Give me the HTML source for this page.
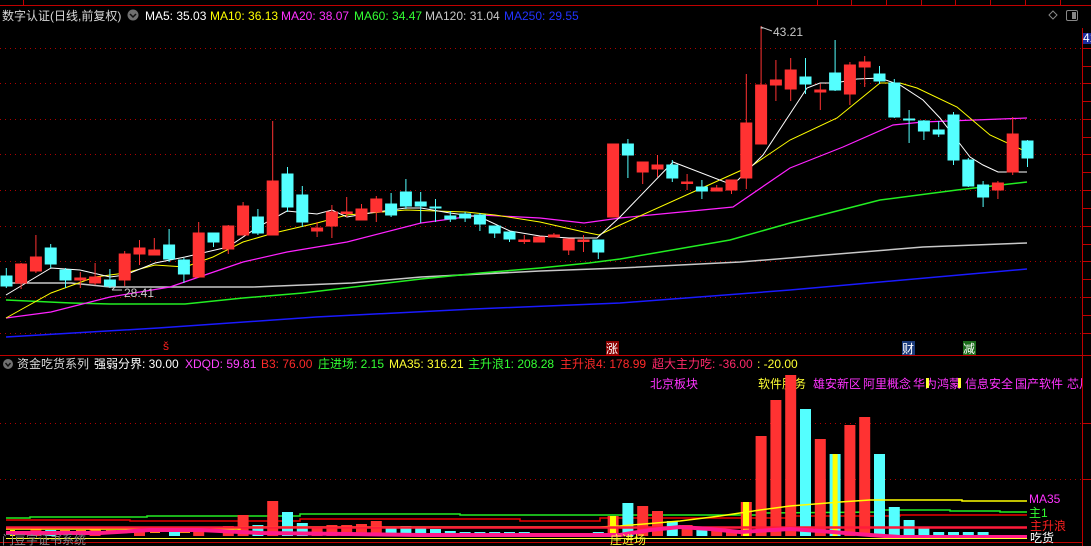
<!DOCTYPE html>
<html><head><meta charset="utf-8"><style>
html,body{margin:0;padding:0;background:#000;width:1091px;height:546px;overflow:hidden}
svg{display:block}
text{font-family:"Liberation Sans","Noto Sans CJK SC",sans-serif;font-size:12px}
</style></head><body>
<svg width="1091" height="546" xmlns="http://www.w3.org/2000/svg">
<rect width="1091" height="546" fill="#000"/>
<!-- top border -->
<line x1="0" y1="5.5" x2="1091" y2="5.5" stroke="#c00000"/>
<line x1="23.5" y1="0" x2="23.5" y2="5" stroke="#c00000"/>
<g stroke="#c00000"><line x1="817.5" y1="0" x2="817.5" y2="5"/><line x1="851.5" y1="0" x2="851.5" y2="5"/><line x1="886.5" y1="0" x2="886.5" y2="5"/><line x1="921.5" y1="0" x2="921.5" y2="5"/><line x1="955.5" y1="0" x2="955.5" y2="5"/><line x1="990.5" y1="0" x2="990.5" y2="5"/><line x1="1025.5" y1="0" x2="1025.5" y2="5"/><line x1="1060.5" y1="0" x2="1060.5" y2="5"/></g>
<!-- header -->
<text x="2" y="20" fill="#d8d8d8">数字认证(日线,前复权)</text>
<circle cx="133" cy="15" r="5.5" fill="#707070"/><path d="M130 14 L133 17 L136 14" stroke="#111" stroke-width="1.5" fill="none"/>
<text x="145" y="20" fill="#fff">MA5: 35.03</text>
<text x="210" y="20" fill="#ffff00">MA10: 36.13</text>
<text x="281" y="20" fill="#ff33ff">MA20: 38.07</text>
<text x="354" y="20" fill="#33ff33">MA60: 34.47</text>
<text x="425" y="20" fill="#c8c8c8">MA120: 31.04</text>
<text x="504" y="20" fill="#2233ff">MA250: 29.55</text>
<!-- icons top right -->
<path d="M1053 11 L1057 15 L1053 19 L1049 15 Z" fill="none" stroke="#888"/>
<rect x="1066.5" y="10.5" width="11" height="10" rx="1.5" fill="none" stroke="#888"/><rect x="1072" y="12" width="4" height="7" fill="#888"/>
<!-- right axis -->
<line x1="1082.5" y1="28" x2="1082.5" y2="546" stroke="#c00000"/>
<rect x="1083" y="33" width="8" height="11" fill="#1a2a9a"/><text x="1083" y="42" fill="#fff" font-size="11">41</text>
<g stroke="#c00000"><line x1="1083" y1="48.5" x2="1091" y2="48.5"/><line x1="1083" y1="66.5" x2="1091" y2="66.5"/><line x1="1083" y1="83.5" x2="1091" y2="83.5"/><line x1="1083" y1="101.5" x2="1091" y2="101.5"/><line x1="1083" y1="119.5" x2="1091" y2="119.5"/><line x1="1083" y1="137.5" x2="1091" y2="137.5"/><line x1="1083" y1="154.5" x2="1091" y2="154.5"/><line x1="1083" y1="172.5" x2="1091" y2="172.5"/><line x1="1083" y1="190.5" x2="1091" y2="190.5"/><line x1="1083" y1="208.5" x2="1091" y2="208.5"/><line x1="1083" y1="226.5" x2="1091" y2="226.5"/><line x1="1083" y1="244.5" x2="1091" y2="244.5"/><line x1="1083" y1="261.5" x2="1091" y2="261.5"/><line x1="1083" y1="279.5" x2="1091" y2="279.5"/><line x1="1083" y1="297.5" x2="1091" y2="297.5"/><line x1="1083" y1="315.5" x2="1091" y2="315.5"/><line x1="1083" y1="333.5" x2="1091" y2="333.5"/><line x1="1083" y1="423.5" x2="1091" y2="423.5"/><line x1="1083" y1="479.5" x2="1091" y2="479.5"/></g>
<!-- grid -->
<g stroke="#b00000" stroke-dasharray="1,4">
<line x1="0" y1="48.5" x2="1082" y2="48.5"/><line x1="0" y1="83.5" x2="1082" y2="83.5"/><line x1="0" y1="119.5" x2="1082" y2="119.5"/><line x1="0" y1="154.5" x2="1082" y2="154.5"/><line x1="0" y1="190.5" x2="1082" y2="190.5"/><line x1="0" y1="226.5" x2="1082" y2="226.5"/><line x1="0" y1="261.5" x2="1082" y2="261.5"/><line x1="0" y1="297.5" x2="1082" y2="297.5"/><line x1="0" y1="333.5" x2="1082" y2="333.5"/>
<line x1="0" y1="423.5" x2="1082" y2="423.5"/><line x1="0" y1="479.5" x2="1082" y2="479.5"/>
</g>
<!-- MA lines -->
<polyline fill="none" stroke="#1a1aff" stroke-width="1.5" points="6,337 158,328 316,317 474,309 620,303 790,290 1027,269"/>
<polyline fill="none" stroke="#c8c8c8" stroke-width="1.5" points="6,283 71,283 110,287 253,287 352,283 421,277 540,271 620,268 740,262 923,247 1027,243"/>
<polyline fill="none" stroke="#22ee22" stroke-width="1.5" points="6,300 71,303 110,304 185,304 243,298 303,293 421,279 480,273 540,268 589,263 620,259 730,240 790,223 880,200 957,190 1027,182"/>
<polyline fill="none" stroke="#ff22ff" stroke-width="1.2" points="6,318 51,312 110,297 170,287 199,277 243,262 287,252 347,242 421,223 480,215 540,218 584,223 620,218 733,207 790,168 843,147 893,125 923,122 1027,118"/>
<polyline fill="none" stroke="#ffff00" stroke-width="1" points="6,318 51,293 95,277 125,273 155,265 185,267 213,257 243,242 274,233 317,223 347,215 406,210 466,212 495,215 540,222 584,232 599,235 620,225 753,165 790,140 837,118 880,83 900,83 917,88 957,107 990,135 1027,152"/>
<polyline fill="none" stroke="#ffffff" stroke-width="1" points="6,295 51,268 80,270 110,277 125,275 155,263 185,257 228,247 258,227 287,211 317,214 332,210 347,217 376,212 406,208 421,208 450,213 480,217 510,231 540,236 569,238 597,238 620,217 673,162 730,184 738,180 763,155 807,88 820,83 835,83 857,79 880,78 900,85 923,100 940,118 957,140 970,157 983,165 998,172 1027,172"/>
<!-- candles -->
<g stroke-width="1">
<g stroke="#54ffff" fill="#54ffff">
<line x1="6.3" y1="268" x2="6.3" y2="288"/><rect x="1" y="276" width="11" height="10"/>
<line x1="50.7" y1="244" x2="50.7" y2="268"/><rect x="45.2" y="248" width="11" height="16"/>
<line x1="65.5" y1="268" x2="65.5" y2="288"/><rect x="60" y="270" width="11" height="10"/>
<line x1="109.9" y1="269" x2="109.9" y2="288"/><rect x="104.4" y="280" width="11" height="6"/>
<line x1="169.1" y1="229" x2="169.1" y2="262"/><rect x="163.6" y="245" width="11" height="14"/>
<line x1="183.9" y1="258" x2="183.9" y2="283"/><rect x="178.4" y="260" width="11" height="14"/>
<line x1="213.5" y1="233" x2="213.5" y2="247"/><rect x="208" y="233" width="11" height="9"/>
<line x1="257.9" y1="209" x2="257.9" y2="235"/><rect x="252.4" y="217" width="11" height="16"/>
<line x1="287.5" y1="167" x2="287.5" y2="212"/><rect x="282" y="174" width="11" height="33"/>
<line x1="302.3" y1="186" x2="302.3" y2="227"/><rect x="296.8" y="195" width="11" height="27"/>
<line x1="391.1" y1="193" x2="391.1" y2="217"/><rect x="385.6" y="204" width="11" height="11"/>
<line x1="405.9" y1="179" x2="405.9" y2="209"/><rect x="400.4" y="192" width="11" height="14"/>
<line x1="420.7" y1="192" x2="420.7" y2="223"/><rect x="415.2" y="202" width="11" height="4"/>
<line x1="435.5" y1="199" x2="435.5" y2="222"/><rect x="430" y="207" width="11" height="1"/>
<line x1="450.3" y1="211" x2="450.3" y2="222"/><rect x="444.8" y="216" width="11" height="3"/>
<line x1="465.1" y1="212" x2="465.1" y2="222"/><rect x="459.6" y="214" width="11" height="4"/>
<line x1="479.9" y1="213" x2="479.9" y2="231"/><rect x="474.4" y="215" width="11" height="9"/>
<line x1="494.7" y1="226" x2="494.7" y2="238"/><rect x="489.2" y="226" width="11" height="7"/>
<line x1="509.5" y1="232" x2="509.5" y2="242"/><rect x="504" y="232" width="11" height="7"/>
<line x1="598.3" y1="240" x2="598.3" y2="259"/><rect x="592.8" y="240" width="11" height="12"/>
<line x1="627.9" y1="139" x2="627.9" y2="178"/><rect x="622.4" y="144" width="11" height="11"/>
<line x1="672.3" y1="160" x2="672.3" y2="182"/><rect x="666.8" y="165" width="11" height="13"/>
<line x1="701.9" y1="180" x2="701.9" y2="199"/><rect x="696.4" y="187" width="11" height="4"/>
<line x1="805.5" y1="58" x2="805.5" y2="94"/><rect x="800" y="77" width="11" height="7"/>
<line x1="835.1" y1="40" x2="835.1" y2="91"/><rect x="829.6" y="73" width="11" height="17"/>
<line x1="879.5" y1="66" x2="879.5" y2="84"/><rect x="874" y="74" width="11" height="7"/>
<line x1="894.3" y1="79" x2="894.3" y2="118"/><rect x="888.8" y="83" width="11" height="34"/>
<line x1="909.1" y1="110" x2="909.1" y2="143"/><rect x="903.6" y="119" width="11" height="1"/>
<line x1="923.9" y1="120" x2="923.9" y2="140"/><rect x="918.4" y="121" width="11" height="10"/>
<line x1="938.7" y1="121" x2="938.7" y2="137"/><rect x="933.2" y="130" width="11" height="4"/>
<line x1="953.5" y1="112" x2="953.5" y2="165"/><rect x="948" y="115" width="11" height="45"/>
<line x1="968.3" y1="158" x2="968.3" y2="187"/><rect x="962.8" y="160" width="11" height="26"/>
<line x1="983.1" y1="181" x2="983.1" y2="207"/><rect x="977.6" y="185" width="11" height="12"/>
<line x1="1027.5" y1="140" x2="1027.5" y2="167"/><rect x="1022" y="141" width="11" height="17"/>
</g>
<g stroke="#ff3232" fill="#ff3232">
<line x1="21.1" y1="263" x2="21.1" y2="289"/><rect x="15.6" y="264" width="11" height="19"/>
<line x1="35.9" y1="235" x2="35.9" y2="273"/><rect x="30.4" y="257" width="11" height="14"/>
<line x1="80.3" y1="272" x2="80.3" y2="288"/><rect x="74.8" y="278" width="11" height="2"/>
<line x1="95.1" y1="263" x2="95.1" y2="285"/><rect x="89.6" y="277" width="11" height="6"/>
<line x1="124.7" y1="251" x2="124.7" y2="286"/><rect x="119.2" y="254" width="11" height="26"/>
<line x1="139.5" y1="240" x2="139.5" y2="265"/><rect x="134" y="248" width="11" height="6"/>
<line x1="154.3" y1="238" x2="154.3" y2="255"/><rect x="148.8" y="250" width="11" height="5"/>
<line x1="198.7" y1="222" x2="198.7" y2="278"/><rect x="193.2" y="233" width="11" height="44"/>
<line x1="228.3" y1="225" x2="228.3" y2="254"/><rect x="222.8" y="226" width="11" height="23"/>
<line x1="243.1" y1="202" x2="243.1" y2="235"/><rect x="237.6" y="206" width="11" height="29"/>
<line x1="272.7" y1="121" x2="272.7" y2="235"/><rect x="267.2" y="181" width="11" height="54"/>
<line x1="317.1" y1="222" x2="317.1" y2="237"/><rect x="311.6" y="228" width="11" height="3"/>
<line x1="331.9" y1="205" x2="331.9" y2="238"/><rect x="326.4" y="212" width="11" height="14"/>
<line x1="346.7" y1="197" x2="346.7" y2="217"/><rect x="341.2" y="212" width="11" height="1.5"/>
<line x1="361.5" y1="204" x2="361.5" y2="220"/><rect x="356" y="209" width="11" height="11"/>
<line x1="376.3" y1="196" x2="376.3" y2="222"/><rect x="370.8" y="199" width="11" height="13"/>
<line x1="524.3" y1="235" x2="524.3" y2="244"/><rect x="518.8" y="240" width="11" height="1.5"/>
<line x1="539.1" y1="237" x2="539.1" y2="242"/><rect x="533.6" y="237" width="11" height="5"/>
<line x1="553.9" y1="233" x2="553.9" y2="237"/><rect x="548.4" y="235" width="11" height="2"/>
<line x1="568.7" y1="239" x2="568.7" y2="255"/><rect x="563.2" y="239" width="11" height="11"/>
<line x1="583.5" y1="235" x2="583.5" y2="252"/><rect x="578" y="240" width="11" height="1.5"/>
<rect x="607.6" y="144" width="11" height="73"/>
<line x1="642.7" y1="162" x2="642.7" y2="184"/><rect x="637.2" y="162" width="11" height="10"/>
<line x1="657.5" y1="155" x2="657.5" y2="177"/><rect x="652" y="165" width="11" height="4"/>
<line x1="687.1" y1="174" x2="687.1" y2="190"/><rect x="681.6" y="182" width="11" height="1.5"/>
<line x1="716.7" y1="185" x2="716.7" y2="191"/><rect x="711.2" y="188" width="11" height="3"/>
<line x1="731.5" y1="180" x2="731.5" y2="194"/><rect x="726" y="180" width="11" height="10"/>
<line x1="746.3" y1="74" x2="746.3" y2="189"/><rect x="740.8" y="123" width="11" height="55"/>
<line x1="761.1" y1="26" x2="761.1" y2="144"/><rect x="755.6" y="85" width="11" height="59"/>
<line x1="775.9" y1="60" x2="775.9" y2="101"/><rect x="770.4" y="80" width="11" height="5"/>
<line x1="790.7" y1="58" x2="790.7" y2="101"/><rect x="785.2" y="70" width="11" height="19"/>
<line x1="820.3" y1="84" x2="820.3" y2="110"/><rect x="814.8" y="90" width="11" height="2"/>
<line x1="849.9" y1="62" x2="849.9" y2="105"/><rect x="844.4" y="65" width="11" height="29"/>
<line x1="864.7" y1="56" x2="864.7" y2="87"/><rect x="859.2" y="62" width="11" height="5"/>
<line x1="997.9" y1="181" x2="997.9" y2="199"/><rect x="992.4" y="183" width="11" height="7"/>
<line x1="1012.7" y1="117" x2="1012.7" y2="175"/><rect x="1007.2" y="134" width="11" height="38"/>
</g>
</g>
<!-- price annotations -->
<text x="773" y="36" fill="#c8c8c8" font-size="12">43.21</text>
<path d="M761 27 L772 31" stroke="#c8c8c8" fill="none"/><text x="760" y="31" fill="#c8c8c8" font-size="8">-</text>
<text x="124" y="297" fill="#c8c8c8" font-size="12">28.41</text>
<path d="M112 290 L122 290 M112 290 L115 287" stroke="#c8c8c8" fill="none"/>
<!-- event markers -->
<text x="163" y="350" fill="#ff2020" font-size="10">š</text>
<rect x="606" y="341" width="13" height="14" fill="#8a0000"/><text x="606" y="353" fill="#fff" font-size="12">涨</text>
<rect x="902" y="341" width="13" height="14" fill="#1a3a7a"/><text x="902" y="353" fill="#fff" font-size="12">财</text>
<rect x="963" y="341" width="13" height="14" fill="#1a6a1a"/><text x="963" y="353" fill="#fff" font-size="12">减</text>
<line x1="0" y1="355.5" x2="1091" y2="355.5" stroke="#c00000"/>
<!-- lower header -->
<circle cx="8" cy="364" r="5" fill="#707070"/><path d="M5.5 363 L8 366 L10.5 363" stroke="#111" stroke-width="1.4" fill="none"/>
<text x="17" y="368" fill="#d8d8d8">资金吃货系列</text>
<text x="94" y="368" fill="#fff">强弱分界: 30.00</text>
<text x="185" y="368" fill="#ff44ff">XDQD: 59.81</text>
<text x="261" y="368" fill="#ff2a2a">B3: 76.00</text>
<text x="318" y="368" fill="#33ff33">庄进场: 2.15</text>
<text x="389" y="368" fill="#ffff33">MA35: 316.21</text>
<text x="468" y="368" fill="#33ff33">主升浪1: 208.28</text>
<text x="560" y="368" fill="#ff2a2a">主升浪4: 178.99</text>
<text x="652" y="368" fill="#ff2a6a">超大主力吃: -36.00</text>
<text x="757" y="368" fill="#ffff33">: -20.00</text>
<text x="650" y="388" fill="#ff33ff">北京板块</text>
<text x="758" y="388" fill="#ffff33">软件服务</text>
<text x="813" y="388" fill="#ff33ff">雄安新区</text>
<text x="863" y="388" fill="#ff33ff">阿里概念</text>
<text x="913" y="388" fill="#ff33ff">华为鸿蒙</text>
<rect x="926" y="378" width="3" height="10" fill="#ffff33"/><rect x="958" y="378" width="3" height="10" fill="#ffff33"/>
<text x="965" y="388" fill="#ff33ff">信息安全</text>
<text x="1015" y="388" fill="#ff33ff">国产软件</text>
<text x="1067" y="388" fill="#ff33ff">芯片</text>
<rect x="1082" y="375" width="9" height="15" fill="#000"/>
<line x1="1082.5" y1="356" x2="1082.5" y2="546" stroke="#c00000"/>
<!-- lower panel lines behind bars -->
<polyline fill="none" stroke="#22ee22" stroke-width="1.5" points="6,518 30,518 30,517 147,517 147,516 300,516 300,514 460,514 460,515 760,515 760,513 880,512 880,510 950,510 950,511 1000,511 1000,512 1027,512"/>
<polyline fill="none" stroke="#ee0000" stroke-width="1.5" points="6,520 130,520 130,521 300,521 300,519 520,519 520,521 600,521 600,518 790,518 790,516 900,516 900,515 1027,515"/>
<!-- lower bars -->
<g fill="#ff3232">
<rect x="222.8" y="526" width="11" height="10"/><rect x="237.6" y="515" width="11" height="21"/><rect x="267.2" y="501" width="11" height="35"/>
<rect x="311.6" y="527" width="11" height="9"/><rect x="326.4" y="525" width="11" height="11"/><rect x="341.2" y="525" width="11" height="11"/><rect x="356" y="524" width="11" height="12"/><rect x="370.8" y="521" width="11" height="15"/>
<rect x="607.6" y="516" width="11" height="20"/><rect x="637.2" y="506" width="11" height="30"/><rect x="652" y="511" width="11" height="25"/><rect x="681.6" y="525" width="11" height="11"/><rect x="711.2" y="531" width="11" height="5"/><rect x="726" y="530" width="11" height="6"/>
<rect x="740.8" y="502" width="11" height="34"/><rect x="755.6" y="436" width="11" height="100"/><rect x="770.4" y="400" width="11" height="136"/><rect x="785.2" y="375" width="11" height="161"/><rect x="814.8" y="439" width="11" height="97"/><rect x="844.4" y="425" width="11" height="111"/><rect x="859.2" y="417" width="11" height="119"/>
<rect x="30.4" y="527" width="11" height="9"/><rect x="89.6" y="528" width="11" height="8"/><rect x="134" y="529" width="11" height="7"/><rect x="193.2" y="527" width="11" height="9"/>
</g>
<g fill="#54ffff">
<rect x="252.4" y="525" width="11" height="11"/><rect x="282" y="512" width="11" height="24"/><rect x="296.8" y="523" width="11" height="13"/>
<rect x="385.6" y="527" width="11" height="9"/><rect x="400.4" y="526" width="11" height="10"/><rect x="415.2" y="527" width="11" height="9"/><rect x="430" y="529" width="11" height="7"/><rect x="444.8" y="531" width="11" height="5"/><rect x="459.6" y="532" width="11" height="4"/><rect x="474.4" y="532" width="11" height="4"/><rect x="489.2" y="532" width="11" height="4"/><rect x="504" y="532" width="11" height="4"/><rect x="518.8" y="532" width="11" height="4"/><rect x="592.8" y="532" width="11" height="4"/>
<rect x="622.4" y="503" width="11" height="33"/><rect x="666.8" y="521" width="11" height="15"/><rect x="696.4" y="530" width="11" height="6"/>
<rect x="800" y="409" width="11" height="127"/><rect x="829.6" y="454" width="11" height="82"/><rect x="874" y="454" width="11" height="82"/><rect x="888.8" y="507" width="11" height="29"/><rect x="903.6" y="520" width="11" height="16"/><rect x="918.4" y="528" width="11" height="8"/><rect x="933.2" y="532" width="11" height="4"/><rect x="948" y="532" width="11" height="4"/><rect x="962.8" y="532" width="11" height="4"/><rect x="977.6" y="532" width="11" height="4"/>
<rect x="45.2" y="530" width="11" height="6"/><rect x="169" y="529" width="11" height="7"/>
</g>
<g fill="#ffff00"><rect x="610" y="516" width="6" height="20"/><rect x="743" y="502" width="6" height="34"/><rect x="832.6" y="454" width="5" height="82"/><rect x="10" y="530" width="5" height="6"/></g>
<g fill="#ff8c1a"><rect x="60" y="530" width="10" height="3"/><rect x="76" y="530" width="10" height="3"/><rect x="91" y="530" width="10" height="3"/><rect x="106" y="530" width="10" height="3"/><rect x="150" y="530" width="10" height="3"/><rect x="180" y="530" width="10" height="3"/></g>
<!-- lower overlays -->
<polyline fill="none" stroke="#ffff00" stroke-width="1.5" points="6,529 240,529 240,527 600,527 620,526 680,521 720,516 760,510 790,506 840,502 870,500 888,500 962,500 962,501 1027,501"/>
<line x1="6" y1="527.5" x2="1027" y2="527.5" stroke="#ff1a3a" stroke-width="2.5"/>
<polyline fill="none" stroke="#ff1a8a" stroke-width="4" points="6,533 100,533 150,530 200,530 260,533 350,534 420,535 500,535 600,535 620,535 650,530 680,527 710,529 740,532 790,529 820,531 870,535 900,537 960,537 1027,537"/>
<line x1="6" y1="538.5" x2="1027" y2="538.5" stroke="#ffff33" stroke-width="1"/>
<line x1="0" y1="542.5" x2="1083" y2="542.5" stroke="#c00000"/>
<text x="2" y="544" fill="#888" font-size="10">门豆字证书系统</text>
<text x="610" y="544" fill="#ffff33" font-size="9">庄进场</text>
<!-- right labels -->
<text x="1029" y="503" fill="#ff33ff" font-size="12">MA35</text>
<text x="1029" y="517" fill="#33ff33" font-size="12">主1</text>
<text x="1030" y="530" fill="#ff2020" font-size="12">主升浪</text>
<text x="1030" y="542" fill="#ffffff" font-size="12">吃货</text>
</svg>
</body></html>
